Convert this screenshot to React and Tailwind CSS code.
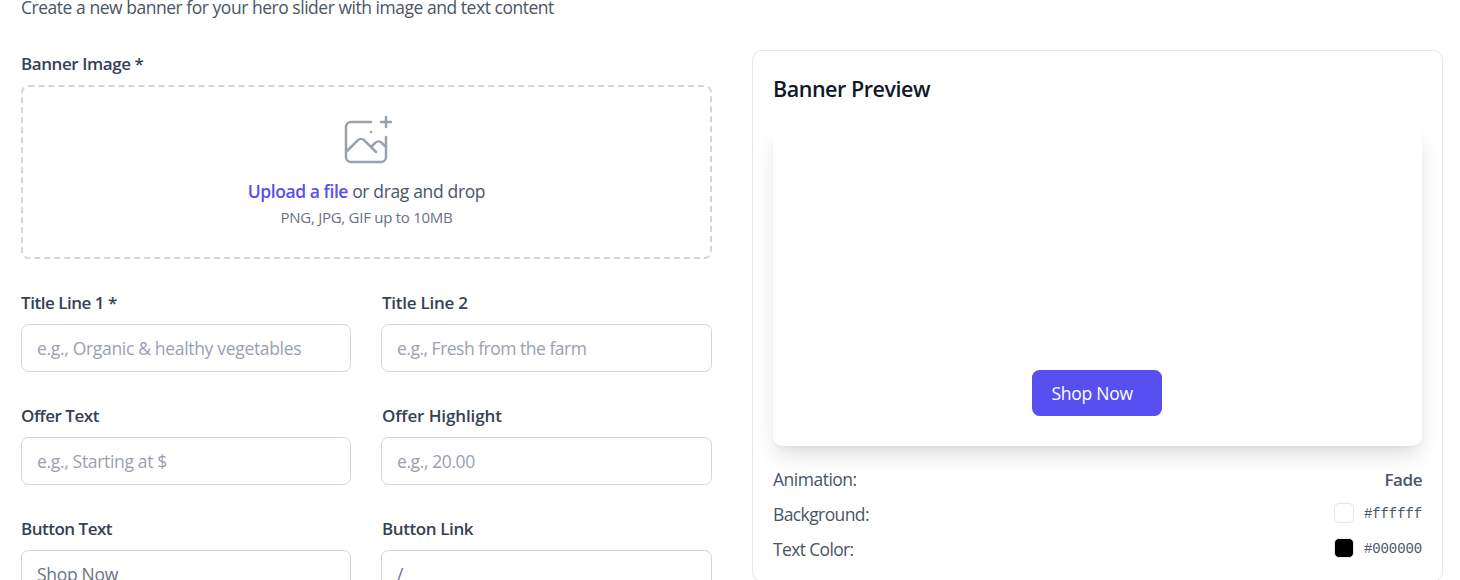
import React from "react";

function Field({ label, labelClass = "", placeholder, value, textClass = "" }) {
  return (
    <label className="block min-w-0">
      <span className={`block h-[25px] text-[17px] leading-[25px] font-semibold whitespace-nowrap text-gray-700 ${labelClass}`}>
        {label}
      </span>
      <input
        type="text"
        placeholder={placeholder}
        defaultValue={value}
        className={`mt-[9px] block h-12 w-full rounded-[7.5px] border border-gray-300 bg-white px-[15px] text-[17.5px] text-gray-500 placeholder:text-gray-400 focus:outline-none ${textClass}`}
      />
    </label>
  );
}

function UploadIcon() {
  return (
    <svg className="mr-px size-[60px] text-gray-400" fill="none" stroke="currentColor" viewBox="0 0 48 48" aria-hidden="true">
      <path
        d="M28 8H12a4 4 0 00-4 4v20m32-12v8m0 0v8a4 4 0 01-4 4H12a4 4 0 01-4-4v-4m32-4l-3.172-3.172a4 4 0 00-5.656 0L28 28M8 32l9.172-9.172a4 4 0 015.656 0L28 28m0 0l4 4m4-24h8m-4-4v8m-12 4h.02"
        strokeWidth="2"
        strokeLinecap="round"
        strokeLinejoin="round"
      />
    </svg>
  );
}

function ColorValue({ swatchClass, value }) {
  return (
    <span className="flex items-center gap-[10px]">
      <span className={`-mt-[2px] size-5 rounded-[5px] border border-gray-200 ${swatchClass}`} />
      <span className="w-[58px] font-['Liberation_Mono',monospace] text-[14px] leading-5 tracking-[-0.12px]">{value}</span>
    </span>
  );
}

export default function App() {
  return (
    <div className="h-[580px] w-[1460px] overflow-hidden bg-white font-['Open_Sans','Noto_Sans',sans-serif]">
      <div className="px-[21px]">
        <p className="h-5 text-[17.5px] leading-[14px] tracking-[-0.47px] whitespace-nowrap text-gray-600">
          Create a new banner for your hero slider with image and text content
        </p>
      </div>

      <div className="mt-[30px] flex items-start gap-10 pl-[21px]">
        <form className="w-[691px] shrink-0">
          <div className="h-[35px] text-[17px] leading-7 font-semibold tracking-[-0.43px] text-gray-700">Banner Image *</div>
          <div className="flex h-[174px] flex-col items-center rounded-[7.5px] border-2 border-dashed border-gray-300 pt-[25px]">
            <UploadIcon />
            <p className="mt-[7px] text-[17.5px] leading-[25px] tracking-[-0.35px] whitespace-nowrap text-gray-600">
              <span className="font-semibold tracking-[-0.44px] text-[#574ff0]">Upload a file</span> or drag and drop
            </p>
            <p className="mt-[3px] text-[15px] leading-5 tracking-[-0.27px] whitespace-nowrap text-gray-500">PNG, JPG, GIF up to 10MB</p>
          </div>

          <div className="mt-[31px] grid grid-cols-[330px_331px] gap-x-[30px] gap-y-[31px]">
            <Field label="Title Line 1 *" labelClass="tracking-[-0.47px]" placeholder="e.g., Organic & healthy vegetables" textClass="tracking-[-0.32px]" />
            <Field label="Title Line 2" labelClass="pl-px tracking-[-0.25px]" placeholder="e.g., Fresh from the farm" textClass="tracking-[-0.5px]" />
            <Field label="Offer Text" labelClass="tracking-[-0.48px]" placeholder="e.g., Starting at $" textClass="tracking-[-0.33px]" />
            <Field label="Offer Highlight" labelClass="pl-px tracking-[-0.1px]" placeholder="e.g., 20.00" textClass="tracking-[-0.4px]" />
            <Field label="Button Text" labelClass="tracking-[-0.5px]" value="Shop Now" textClass="tracking-[-0.3px]" />
            <Field label="Button Link" labelClass="pl-px tracking-[-0.4px]" value="/" />
          </div>
        </form>

        <section className="h-[532px] w-[691px] shrink-0 rounded-[10px] border border-gray-200 px-5 pt-5">
          <h3 className="h-[55px] text-[21.5px] leading-9 font-semibold tracking-[-0.46px] text-gray-900">Banner Preview</h3>
          <div className="flex h-80 items-end justify-center rounded-[10px] bg-white pr-[2px] pb-[30px] shadow-[0_12.5px_22px_-3.5px_rgb(0_0_0/0.12),0_5px_7.5px_-4px_rgb(0_0_0/0.08)]">
            <button type="button" className="h-[46px] w-[130px] rounded-[7.5px] bg-[#574ff0] pt-px pl-5 text-left text-[17.5px] tracking-[-0.25px] whitespace-nowrap text-white">
              Shop Now
            </button>
          </div>
          <dl className="mt-5 flex flex-col gap-[10px] text-[17.5px] leading-[25px] text-gray-600">
            <div className="flex h-[25px] justify-between">
              <dt className="pt-px tracking-[-0.5px]">Animation:</dt>
              <dd className="pt-px text-[17px] font-semibold tracking-[-0.45px]">Fade</dd>
            </div>
            <div className="flex h-[25px] justify-between">
              <dt className="pt-px tracking-[-0.6px]">Background:</dt>
              <dd className="flex"><ColorValue swatchClass="bg-white" value="#ffffff" /></dd>
            </div>
            <div className="flex h-[25px] justify-between">
              <dt className="pt-px tracking-[-0.65px]">Text Color:</dt>
              <dd className="flex"><ColorValue swatchClass="bg-black" value="#000000" /></dd>
            </div>
          </dl>
        </section>
      </div>
    </div>
  );
}
